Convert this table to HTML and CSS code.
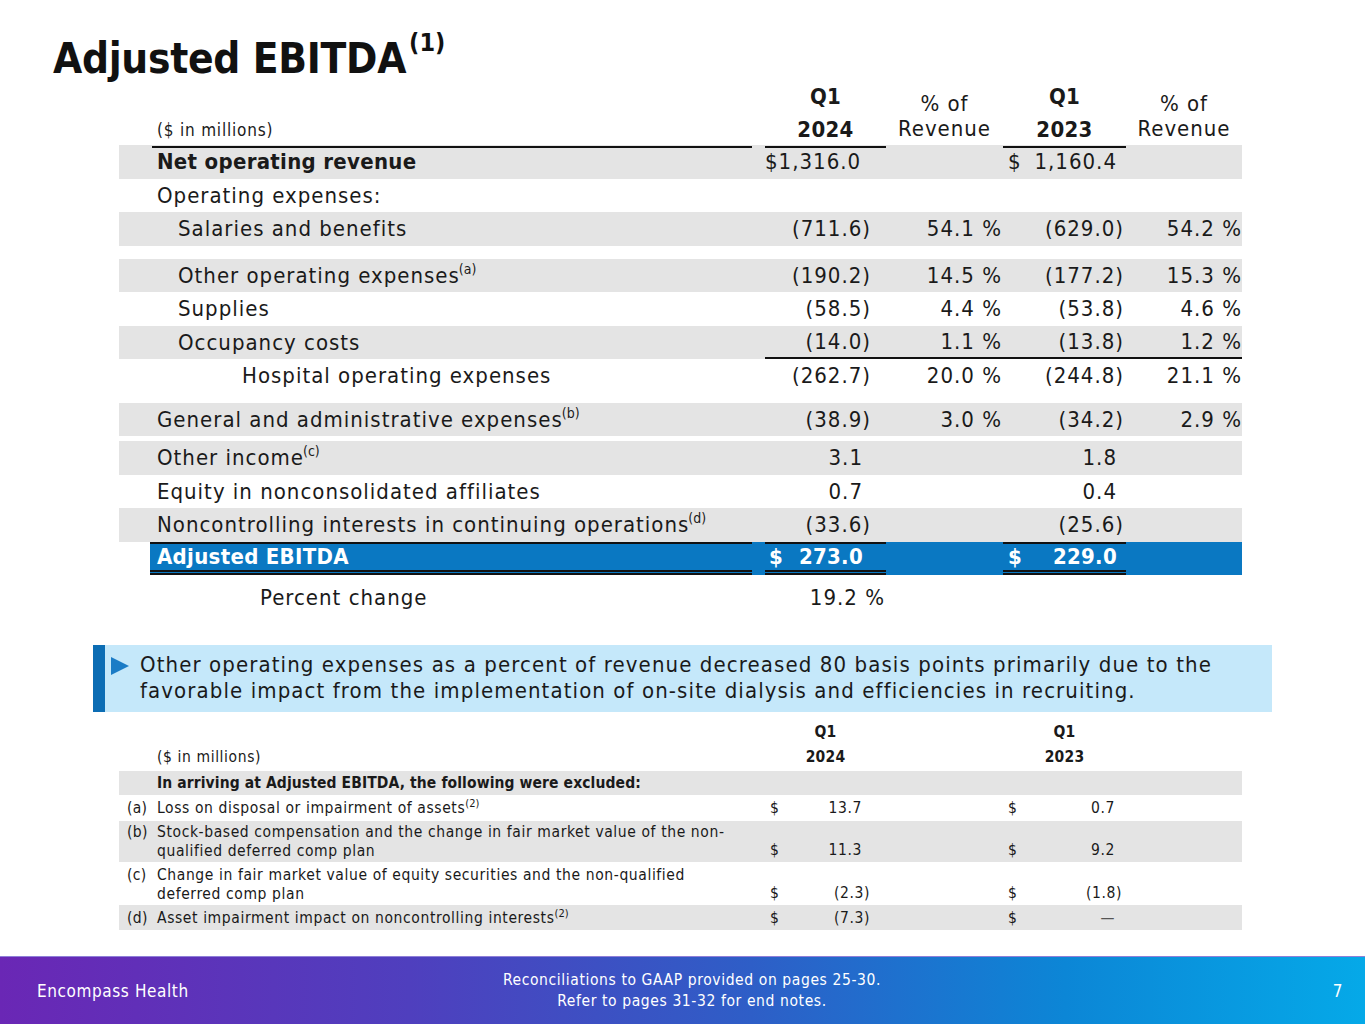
FILE: index.html
```html
<!DOCTYPE html>
<html>
<head>
<meta charset="utf-8">
<title>Adjusted EBITDA</title>
<link rel="stylesheet" href="styles.css">
</head>
<body>
<div class="slide">
  <h1 class="title">Adjusted EBITDA<sup>(1)</sup></h1>

  <div class="main">
    <div class="row head">
      <div class="lab"><span class="hl">($ in millions)</span></div>
      <div class="q">Q1<br>2024</div>
      <div class="pr">% of<br>Revenue</div>
      <div class="q">Q1<br>2023</div>
      <div class="pr">% of<br>Revenue</div>
    </div>

    <div class="row g">
      <div class="lab b">Net operating revenue</div>
      <div class="c1 dol np first"><span>$1,316.0</span></div>
      <div class="p1"></div>
      <div class="c2 dol np"><span>$</span><span>1,160.4</span></div>
      <div class="p2"></div>
    </div>
    <div class="row">
      <div class="lab">Operating expenses:</div>
      <div class="c1"></div><div class="p1"></div><div class="c2"></div><div class="p2"></div>
    </div>
    <div class="row g">
      <div class="lab i1">Salaries and benefits</div>
      <div class="c1">(711.6)</div>
      <div class="p1">54.1 %</div>
      <div class="c2">(629.0)</div>
      <div class="p2">54.2 %</div>
    </div>
    <div class="sp s13"></div>
    <div class="row g">
      <div class="lab i1"><span>Other operating expenses<sup>(a)</sup></span></div>
      <div class="c1">(190.2)</div>
      <div class="p1">14.5 %</div>
      <div class="c2">(177.2)</div>
      <div class="p2">15.3 %</div>
    </div>
    <div class="row">
      <div class="lab i1">Supplies</div>
      <div class="c1">(58.5)</div>
      <div class="p1">4.4 %</div>
      <div class="c2">(53.8)</div>
      <div class="p2">4.6 %</div>
    </div>
    <div class="row g ul">
      <div class="lab i1">Occupancy costs</div>
      <div class="c1">(14.0)</div>
      <div class="p1">1.1 %</div>
      <div class="c2">(13.8)</div>
      <div class="p2">1.2 %</div>
    </div>
    <div class="row">
      <div class="lab i2">Hospital operating expenses</div>
      <div class="c1">(262.7)</div>
      <div class="p1">20.0 %</div>
      <div class="c2">(244.8)</div>
      <div class="p2">21.1 %</div>
    </div>
    <div class="sp s10"></div>
    <div class="row g">
      <div class="lab"><span>General and administrative expenses<sup>(b)</sup></span></div>
      <div class="c1">(38.9)</div>
      <div class="p1">3.0 %</div>
      <div class="c2">(34.2)</div>
      <div class="p2">2.9 %</div>
    </div>
    <div class="sp s5"></div>
    <div class="row g">
      <div class="lab"><span>Other income<sup>(c)</sup></span></div>
      <div class="c1 np">3.1</div>
      <div class="p1"></div>
      <div class="c2 np">1.8</div>
      <div class="p2"></div>
    </div>
    <div class="row">
      <div class="lab">Equity in nonconsolidated affiliates</div>
      <div class="c1 np">0.7</div>
      <div class="p1"></div>
      <div class="c2 np">0.4</div>
      <div class="p2"></div>
    </div>
    <div class="row g">
      <div class="lab"><span>Noncontrolling interests in continuing operations<sup>(d)</sup></span></div>
      <div class="c1">(33.6)</div>
      <div class="p1"></div>
      <div class="c2">(25.6)</div>
      <div class="p2"></div>
    </div>
    <div class="row eb">
      <div class="lab"><div class="ebl">Adjusted EBITDA</div></div>
      <div class="c1 dol np"><span>$</span><span>273.0</span></div>
      <div class="p1"></div>
      <div class="c2 dol np"><span>$</span><span>229.0</span></div>
      <div class="p2"></div>
    </div>
    <div class="row pc">
      <div class="lab i3">Percent change</div>
      <div class="c1 pcv">19.2 %</div>
      <div class="p1"></div><div class="c2"></div><div class="p2"></div>
    </div>
  </div>

  <div class="callout">
    <svg class="tri" width="20" height="20" viewBox="0 0 20 20"><polygon points="1,1 19,10 1,19" fill="#1b7cc6"/></svg>
    <p>Other operating expenses as a percent of revenue decreased 80 basis points primarily due to the<br>favorable impact from the implementation of on-site dialysis and efficiencies in recruiting.</p>
  </div>

  <div class="notes">
    <div class="nrow nhead">
      <div class="nlab"><span class="fl"></span><span>($ in millions)</span></div>
      <div class="nq">Q1<br>2024</div>
      <div></div>
      <div class="nq">Q1<br>2023</div>
      <div></div>
    </div>
    <div class="nrow g h24">
      <div class="nlab b"><span class="fl"></span><span>In arriving at Adjusted EBITDA, the following were excluded:</span></div>
      <div></div><div></div><div></div><div></div>
    </div>
    <div class="nrow h26">
      <div class="nlab"><span class="fl">(a)</span><span>Loss on disposal or impairment of assets<sup>(2)</sup></span></div>
      <div class="n1"><span>$</span><span>13.7</span></div>
      <div></div>
      <div class="n2"><span>$</span><span>0.7</span></div>
      <div></div>
    </div>
    <div class="nrow g h41 two">
      <div class="nlab"><span class="fl">(b)</span><span>Stock-based compensation and the change in fair market value of the non-<br>qualified deferred comp plan</span></div>
      <div class="n1"><span>$</span><span>11.3</span></div>
      <div></div>
      <div class="n2"><span>$</span><span>9.2</span></div>
      <div></div>
    </div>
    <div class="nrow h43 two">
      <div class="nlab"><span class="fl">(c)</span><span>Change in fair market value of equity securities and the non-qualified<br>deferred comp plan</span></div>
      <div class="n1 p"><span>$</span><span>(2.3)</span></div>
      <div></div>
      <div class="n2 p"><span>$</span><span>(1.8)</span></div>
      <div></div>
    </div>
    <div class="nrow g h25">
      <div class="nlab"><span class="fl">(d)</span><span>Asset impairment impact on noncontrolling interests<sup>(2)</sup></span></div>
      <div class="n1 p"><span>$</span><span>(7.3)</span></div>
      <div></div>
      <div class="n2"><span>$</span><span class="dash">—</span></div>
      <div></div>
    </div>
  </div>

  <footer class="foot">
    <div class="brand">Encompass Health</div>
    <div class="ref">Reconciliations to GAAP provided on pages 25-30.<br>Refer to pages 31-32 for end notes.</div>
    <div class="pg">7</div>
  </footer>
</div>
</body>
</html>
```

FILE: styles.css
```css
* { box-sizing: border-box; margin: 0; padding: 0; }

body {
  width: 1365px;
  height: 1024px;
  overflow: hidden;
  background: #fff;
  color: #1a1a1a;
  font-family: "DejaVu Sans Condensed", "DejaVu Sans", sans-serif;
}

.slide {
  width: 1365px;
  height: 1024px;
  display: flex;
  flex-direction: column;
}

/* Title */
.title {
  height: 80px;
  padding: 37px 0 0 53px;
  font-size: 42px;
  line-height: 43px;
  font-weight: bold;
  letter-spacing: -0.3px;
  color: #111;
}
.title sup {
  font-size: 25px;
  letter-spacing: 0;
  vertical-align: 0.9em;
  line-height: 0;
  margin-left: 3px;
}

/* Main table */
.main {
  margin-left: 119px;
  width: 1123px;
  font-size: 22px;
  letter-spacing: 1px;
}

.row {
  display: grid;
  grid-template-columns: 646px 121px 117px 123px 116px;
  height: 33.5px;
}
.row > div {
  display: flex;
  align-items: center;
  white-space: nowrap;
}
.g { background: #e4e4e4; }
.b { font-weight: bold; letter-spacing: 0.3px; }

.lab { padding-left: 38px; }
.lab.i1 { padding-left: 59px; }
.lab.i2 { padding-left: 123px; }
.lab.i3 { padding-left: 141px; }
.lab sup {
  font-size: 14px;
  letter-spacing: 0;
  vertical-align: 9px;
  line-height: 0;
  margin-left: -1px;
}
.nlab sup {
  font-size: 11px;
  letter-spacing: 0;
  vertical-align: 6px;
  line-height: 0;
}

.c1, .c2, .p1, .p2 { justify-content: flex-end; }
.c1 { padding-right: 15px; }
.c1.np { padding-right: 23px; }
.c1.first { padding-right: 19px; }
.c2 { padding-right: 2px; }
.c2.np { padding-right: 9px; }
.p1 { padding-right: 1px; }
.p2 { padding-right: 0; }
.row > .dol { justify-content: space-between; }
.c2.dol { padding-left: 5px; }

/* header */
.row.head { height: 65px; }
.row.head > div { align-items: flex-end; }
.head .lab { padding-left: 33px; padding-right: 13px; }
.hl {
  display: block;
  width: 100%;
  font-size: 17px;
  letter-spacing: 0.8px;
  line-height: 22px;
  padding: 0 0 5px 5px;
  border-bottom: 2px solid #111;
}
.row.head > .q {
  display: block;
  align-self: end;
  text-align: center;
  font-weight: bold;
  letter-spacing: 0.3px;
  line-height: 33px;
  border-bottom: 2px solid #111;
}
.row.head > .pr {
  display: block;
  align-self: end;
  text-align: center;
  line-height: 25px;
  padding-bottom: 7px;
}

.ul .c1, .ul .p1, .ul .c2, .ul .p2 { border-bottom: 2px solid #111; }

.s13 { height: 13px; }
.s10 { height: 10px; }
.s5 { height: 5px; }

/* Adjusted EBITDA row */
.row.eb > div { background: #0a78c2; color: #fff; font-weight: bold; letter-spacing: 0.3px; }
.row.eb > .lab {
  margin-left: 31px;
  padding-left: 0;
  align-items: stretch;
}
.ebl {
  flex: 1;
  margin-right: 13px;
  padding-left: 7px;
  display: flex;
  align-items: center;
  border-top: 2px solid #111;
  border-bottom: 5px double #111;
}
.row.eb > .c1, .row.eb > .c2 {
  border-top: 2px solid #111;
  border-bottom: 5px double #111;
}
.row.eb > .c1 { padding-left: 4px; }
.row.eb > .c2 { padding-left: 5px; }

.row.pc { margin-top: 5px; height: 35px; }
.c1.pcv { padding-right: 1px; }

/* Callout */
.callout {
  margin: 30px 0 0 93px;
  width: 1179px;
  height: 67px;
  background: #c5e8fa;
  border-left: 12px solid #0c6db4;
  display: flex;
  align-items: flex-start;
}
.tri { margin: 11px 0 0 5px; flex: none; }
.callout p {
  margin: 7px 0 0 10px;
  font-size: 22px;
  line-height: 26px;
  letter-spacing: 1.1px;
  white-space: nowrap;
  color: #1a1a1a;
}

/* Notes table */
.notes {
  margin: 8px 0 0 119px;
  width: 1123px;
  font-size: 15.5px;
  letter-spacing: 0.6px;
}
.nrow {
  display: grid;
  grid-template-columns: 646px 121px 117px 123px 116px;
}
.nrow > div { display: flex; align-items: center; white-space: nowrap; }
.nrow .b { letter-spacing: 0.1px; }
.nhead { height: 51px; }
.nhead > div { align-items: flex-end; }
.nq {
  display: block !important;
  text-align: center;
  font-weight: bold;
  letter-spacing: 0.2px;
  line-height: 25px;
  padding-bottom: 1px;
}
.nhead .nlab { padding-bottom: 1px; line-height: 25px; }

.nlab .fl {
  display: inline-block;
  width: 38px;
  padding-left: 8px;
  letter-spacing: 0.3px;
  flex: none;
}
.h24 { height: 24px; }
.h25 { height: 25px; }
.h26 { height: 26px; }
.h41 { height: 41px; }
.h43 { height: 43px; }
.two > div { align-items: flex-end; padding-bottom: 3px; }
.two .nlab { line-height: 19px; align-items: flex-start; padding-top: 2px; padding-bottom: 0; }
.two.h43 .nlab { padding-top: 4px; }

.n1, .n2 { justify-content: space-between; }
.n1 { padding: 0 24px 0 5px; }
.n1.p { padding-right: 16px; }
.n2 { padding: 0 11px 0 5px; }
.n2.p { padding-right: 4px; }
.dash { color: #555; }

/* Footer */
.foot {
  margin-top: auto;
  height: 68px;
  display: grid;
  grid-template-columns: 1fr auto 1fr;
  align-items: center;
  color: #fff;
  letter-spacing: 0.6px;
  background: linear-gradient(90deg, #6a27b5 0%, #4f3fbe 30%, #2e5ec7 55%, #0c86d6 78%, #05a9e8 100%);
  border-top: 1px solid #8f7fd8;
}
.brand { padding-left: 37px; font-size: 17px; }
.ref {
  text-align: center;
  font-size: 15.5px;
  line-height: 21px;
  padding-left: 19px;
}
.pg { text-align: right; padding-right: 22px; font-size: 17px; }
```
